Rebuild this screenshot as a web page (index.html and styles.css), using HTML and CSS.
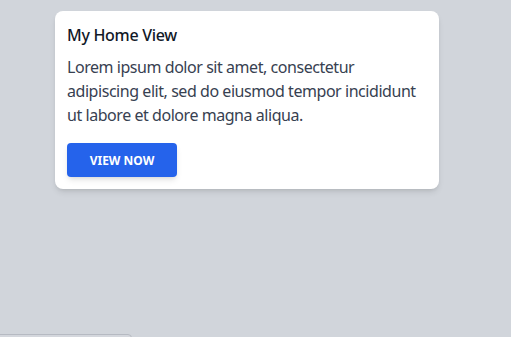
FILE: index.html
```html
<!DOCTYPE html>
<html lang="en">
<head>
<meta charset="utf-8">
<title>My Home View</title>
<link rel="stylesheet" href="styles.css">
</head>
<body>
<main class="page">
  <section class="card">
    <h2 class="card-title">My Home View</h2>
    <p class="card-text">Lorem ipsum dolor sit amet, consectetur adipiscing elit, sed do eiusmod tempor incididunt ut labore et dolore magna aliqua.</p>
    <button class="btn" type="button">View now</button>
  </section>
</main>
<div class="drawer-edge"></div>
</body>
</html>
```

FILE: styles.css
```css
html, body {
  margin: 0;
  padding: 0;
  height: 100%;
}
body {
  background: #d1d5db;
  font-family: "Noto Sans", "Open Sans", sans-serif;
  overflow: hidden;
}
.page {
  padding: 11px 0 0 55px;
}
.card {
  width: 384px;
  box-sizing: border-box;
  background: #ffffff;
  border-radius: 8px;
  padding: 12px;
  box-shadow: 0 4px 6px -1px rgba(0,0,0,0.1), 0 2px 4px -2px rgba(0,0,0,0.1);
}
.card-title {
  margin: 0 0 8px;
  font-size: 16px;
  line-height: 24px;
  font-weight: 500;
  letter-spacing: -0.3px;
  color: #111827;
}
.card-text {
  margin: 0;
  font-size: 16px;
  line-height: 24px;
  color: #374151;
  letter-spacing: -0.45px;
}
.btn {
  display: inline-block;
  margin-top: 16px;
  height: 34px;
  width: 110px;
  padding: 0;
  border: none;
  border-radius: 4px;
  background: #2563eb;
  color: #ffffff;
  font-family: inherit;
  font-size: 12px;
  font-weight: 700;
  text-transform: uppercase;
  box-shadow: 0 4px 6px -1px rgba(0,0,0,0.1), 0 2px 4px -2px rgba(0,0,0,0.1);
  cursor: pointer;
}
.drawer-edge {
  position: fixed;
  left: -4px;
  top: 334px;
  width: 134px;
  height: 20px;
  border: 1px solid #b6bac2;
  border-radius: 4px;
  background: #d4d7dd;
}
```
